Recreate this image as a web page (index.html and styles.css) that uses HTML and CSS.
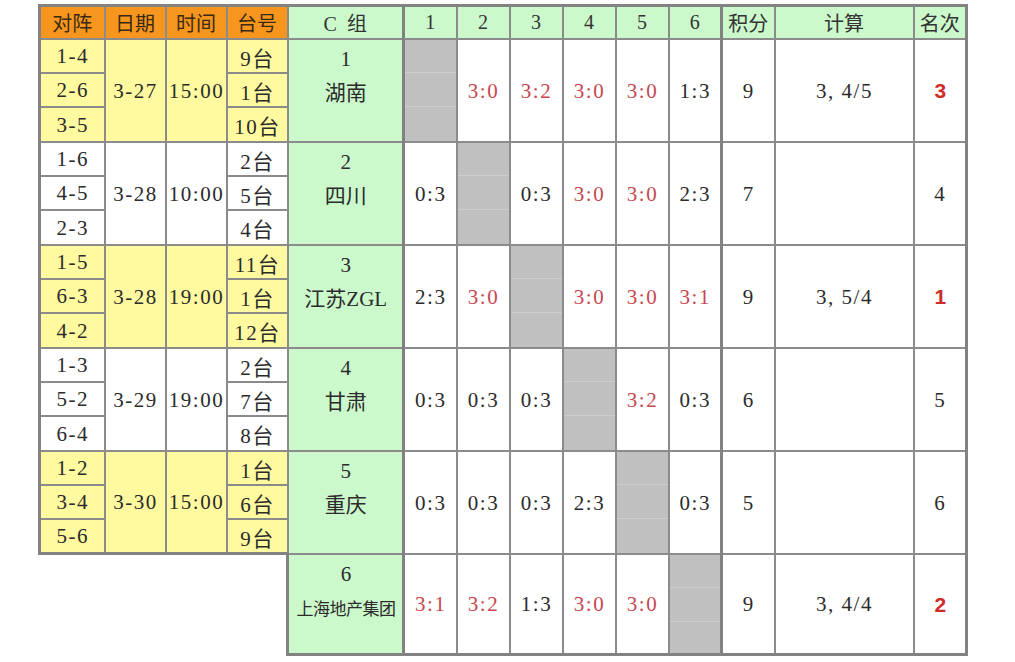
FILE: index.html
```html
<!DOCTYPE html>
<html lang="zh">
<head>
<meta charset="utf-8">
<title>C 组</title>
<link rel="stylesheet" href="styles.css">
</head>
<body>
<table class="draw">
  <colgroup>
    <col class="w-match"><col class="w-date"><col class="w-time"><col class="w-desk">
    <col class="w-team">
    <col class="w-s"><col class="w-s"><col class="w-s"><col class="w-s"><col class="w-s"><col class="w-s">
    <col class="w-pts"><col class="w-calc"><col class="w-rank">
  </colgroup>
  <tr class="head">
    <th class="orange first">对阵</th><th class="orange">日期</th><th class="orange">时间</th><th class="orange">台号</th>
    <th class="green team">C&nbsp;&nbsp;组</th>
    <th class="green">1</th><th class="green">2</th><th class="green">3</th><th class="green">4</th><th class="green">5</th><th class="green sep">6</th>
    <th class="green">积分</th><th class="green">计算</th><th class="green last">名次</th>
  </tr>

  <!-- group 1 -->
  <tr class="ra">
    <td class="yellow first">1-4</td><td class="yellow" rowspan="3">3-27</td><td class="yellow" rowspan="3">15:00</td><td class="yellow">9台</td>
    <td class="green team" rowspan="3">1<br>湖南</td>
    <td class="gx top"></td>
    <td class="red" rowspan="3">3:0</td><td class="red" rowspan="3">3:2</td><td class="red" rowspan="3">3:0</td><td class="red" rowspan="3">3:0</td><td class="sep" rowspan="3">1:3</td>
    <td rowspan="3">9</td><td rowspan="3">3, 4/5</td><td class="rank win last" rowspan="3">3</td>
  </tr>
  <tr class="rb"><td class="yellow first">2-6</td><td class="yellow">1台</td><td class="gx"></td></tr>
  <tr class="rc"><td class="yellow first">3-5</td><td class="yellow">10台</td><td class="gx bot"></td></tr>

  <!-- group 2 -->
  <tr class="ra">
    <td class="first">1-6</td><td rowspan="3">3-28</td><td rowspan="3">10:00</td><td>2台</td>
    <td class="green team" rowspan="3">2<br>四川</td>
    <td rowspan="3">0:3</td>
    <td class="gx top"></td>
    <td rowspan="3">0:3</td><td class="red" rowspan="3">3:0</td><td class="red" rowspan="3">3:0</td><td class="sep" rowspan="3">2:3</td>
    <td rowspan="3">7</td><td rowspan="3"></td><td class="rank last" rowspan="3">4</td>
  </tr>
  <tr class="rb"><td class="first">4-5</td><td>5台</td><td class="gx"></td></tr>
  <tr class="rc"><td class="first">2-3</td><td>4台</td><td class="gx bot"></td></tr>

  <!-- group 3 -->
  <tr class="ra">
    <td class="yellow first">1-5</td><td class="yellow" rowspan="3">3-28</td><td class="yellow" rowspan="3">19:00</td><td class="yellow">11台</td>
    <td class="green team" rowspan="3">3<br>江苏ZGL</td>
    <td rowspan="3">2:3</td><td class="red" rowspan="3">3:0</td>
    <td class="gx top"></td>
    <td class="red" rowspan="3">3:0</td><td class="red" rowspan="3">3:0</td><td class="red sep" rowspan="3">3:1</td>
    <td rowspan="3">9</td><td rowspan="3">3, 5/4</td><td class="rank win last" rowspan="3">1</td>
  </tr>
  <tr class="rb"><td class="yellow first">6-3</td><td class="yellow">1台</td><td class="gx"></td></tr>
  <tr class="rc"><td class="yellow first">4-2</td><td class="yellow">12台</td><td class="gx bot"></td></tr>

  <!-- group 4 -->
  <tr class="ra">
    <td class="first">1-3</td><td rowspan="3">3-29</td><td rowspan="3">19:00</td><td>2台</td>
    <td class="green team" rowspan="3">4<br>甘肃</td>
    <td rowspan="3">0:3</td><td rowspan="3">0:3</td><td rowspan="3">0:3</td>
    <td class="gx top"></td>
    <td class="red" rowspan="3">3:2</td><td class="sep" rowspan="3">0:3</td>
    <td rowspan="3">6</td><td rowspan="3"></td><td class="rank last" rowspan="3">5</td>
  </tr>
  <tr class="rb"><td class="first">5-2</td><td>7台</td><td class="gx"></td></tr>
  <tr class="rc"><td class="first">6-4</td><td>8台</td><td class="gx bot"></td></tr>

  <!-- group 5 -->
  <tr class="ra">
    <td class="yellow first">1-2</td><td class="yellow lb" rowspan="3">3-30</td><td class="yellow lb" rowspan="3">15:00</td><td class="yellow">1台</td>
    <td class="green team" rowspan="3">5<br>重庆</td>
    <td rowspan="3">0:3</td><td rowspan="3">0:3</td><td rowspan="3">0:3</td><td rowspan="3">2:3</td>
    <td class="gx top"></td>
    <td class="sep" rowspan="3">0:3</td>
    <td rowspan="3">5</td><td rowspan="3"></td><td class="rank last" rowspan="3">6</td>
  </tr>
  <tr class="rb"><td class="yellow first">3-4</td><td class="yellow">6台</td><td class="gx"></td></tr>
  <tr class="rc"><td class="yellow first lb">5-6</td><td class="yellow lb">9台</td><td class="gx bot"></td></tr>

  <!-- group 6 -->
  <tr class="ra">
    <td class="blank" colspan="4" rowspan="3"></td>
    <td class="green team edge bottom" rowspan="3">6<br><span class="long">上海地产集团</span></td>
    <td class="red bottom" rowspan="3">3:1</td><td class="red bottom" rowspan="3">3:2</td><td class="bottom" rowspan="3">1:3</td><td class="red bottom" rowspan="3">3:0</td><td class="red bottom" rowspan="3">3:0</td>
    <td class="gx top sep"></td>
    <td class="bottom" rowspan="3">9</td><td class="bottom" rowspan="3">3, 4/4</td><td class="rank win last bottom" rowspan="3">2</td>
  </tr>
  <tr class="rb"><td class="gx sep"></td></tr>
  <tr class="rc last-row"><td class="gx bot sep bottom"></td></tr>
</table>
</body>
</html>
```

FILE: styles.css
```css
body {
  margin: 0;
  padding: 4px 0 0 38px;
  background: #ffffff;
}

.draw {
  border-collapse: collapse;
  table-layout: fixed;
  width: 927px;
  font-family: "Liberation Serif", "Noto Sans CJK SC", serif;
  font-size: 21px;
  color: #2b2b2b;
}

.w-match { width: 65px; }
.w-date { width: 61px; }
.w-time { width: 61px; }
.w-desk { width: 61px; }
.w-team { width: 116px; }
.w-s { width: 53px; }
.w-pts { width: 53px; }
.w-calc { width: 139px; }
.w-rank { width: 53px; }

.draw th,
.draw td {
  border: 2px solid #8b8b8b;
  padding: 2px 0 0 1px;
  text-align: center;
  vertical-align: middle;
  font-weight: normal;
  white-space: nowrap;
  overflow: hidden;
  background: #ffffff;
  letter-spacing: 1.5px;
}

.draw th {
  font-family: "Noto Sans CJK SC", "Liberation Serif", sans-serif;
  font-size: 20px;
  color: #333333;
  border-top: 3px solid #828282;
  padding: 0;
  letter-spacing: 0;
}

.draw th.green {
  font-family: "Liberation Serif", "Noto Sans CJK SC", serif;
}

.head { height: 33px; }
.ra { height: 34px; }
.rb { height: 34px; }
.rc { height: 35px; }
.rc.last-row { height: 33px; }

.draw .orange { background: #f7961e; color: #3a2a10; }
.draw .yellow { background: #fffa9f; }
.draw .green { background: #cbf9cb; }

.draw .first { border-left: 3px solid #828282; }
.draw .last { border-right: 3px solid #828282; }
.draw .sep { border-right: 3px solid #828282; }
.draw .team { border-right: 3px solid #828282; }
.draw .lb { border-bottom: 3px solid #828282; }
.draw .bottom { border-bottom: 3px solid #828282; }
.draw .edge { border-left: 3px solid #828282; }

.draw td.team {
  vertical-align: top;
  line-height: 34px;
  padding-top: 2px;
  letter-spacing: 0;
  font-family: "Liberation Serif", "Noto Sans CJK SC", serif;
}

.long {
  font-family: "Noto Sans CJK SC", sans-serif;
  font-size: 17px;
  letter-spacing: -0.5px;
}

.draw .blank {
  border-left: none;
  border-bottom: none;
  border-right: none;
  background: transparent;
}

.draw .red { color: #c8474e; }

.draw .rank.win {
  font-family: "Liberation Sans", sans-serif;
  font-weight: bold;
  color: #d12c2c;
  letter-spacing: 0;
}

.draw td.gx {
  background: #c0c0c0;
  border-top: 1px solid #cdcdcd;
  border-bottom: 1px solid #cdcdcd;
}

.draw td.gx.top { border-top: 2px solid #8b8b8b; }
.draw td.gx.bot { border-bottom: 2px solid #8b8b8b; }
.draw td.gx.bot.bottom { border-bottom: 3px solid #828282; }
```
